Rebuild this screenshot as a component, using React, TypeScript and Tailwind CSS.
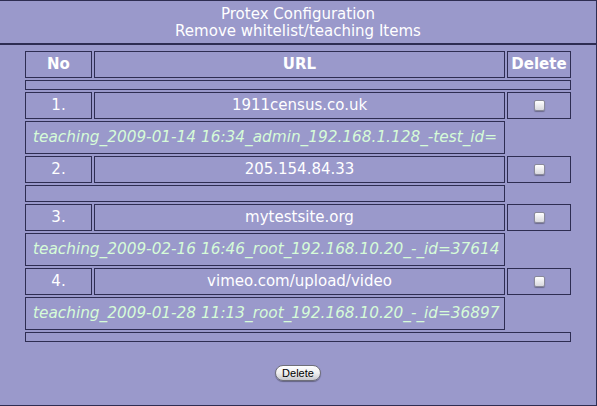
const rows = [
  { no: "1.", url: "1911census.co.uk", note: "teaching_2009-01-14 16:34_admin_192.168.1.128_-test_id=" },
  { no: "2.", url: "205.154.84.33", note: "" },
  { no: "3.", url: "mytestsite.org", note: "teaching_2009-02-16 16:46_root_192.168.10.20_-_id=37614" },
  { no: "4.", url: "vimeo.com/upload/video", note: "teaching_2009-01-28 11:13_root_192.168.10.20_-_id=36897" },
];

const cell = "border border-[#2e2d52] flex items-center justify-center";

function Checkbox() {
  return (
    <div className="w-[11px] h-[11px] rounded-[2px] border border-[#8a8a9a] bg-gradient-to-b from-white to-[#d8d8de] shadow-[0_1px_1px_rgba(0,0,0,0.3)]" />
  );
}

export default function App() {
  return (
    <div
      className="w-[597px] h-[406px] bg-[#9a99cb] border-t border-r border-b border-[#2e2d52] text-white overflow-hidden"
      style={{ fontFamily: '"DejaVu Sans", Verdana, sans-serif' }}
    >
      {/* Title */}
      <div className="h-[44px] border-b-2 border-[#2e2d52] flex flex-col items-center justify-center text-[15px] leading-[17px] pt-[2px]">
        <div>Protex Configuration</div>
        <div>Remove whitelist/teaching Items</div>
      </div>

      {/* Items table */}
      <div className="pl-[25px] mt-[6px]">
        <div className="grid grid-cols-[67px_411px_64px] gap-[2px] text-[15px]">
          <div className={`${cell} h-[27px] font-bold`}>No</div>
          <div className={`${cell} h-[27px] font-bold`}>URL</div>
          <div className={`${cell} h-[27px] font-bold`}>Delete</div>
          <div className="col-span-3 h-[10px] border border-[#2e2d52]" />

          {rows.map((r, i) => (
            <div key={r.no} className="contents">
              <div className={`${cell} h-[27px]`}>{r.no}</div>
              <div className={`${cell} h-[27px]`}>{r.url}</div>
              <div className={`${cell} h-[27px]`}>
                <Checkbox />
              </div>
              {r.note ? (
                <div className="col-span-2 h-[33px] border border-[#2e2d52] flex items-center pl-[7px] overflow-hidden whitespace-nowrap italic text-[15.3px] text-[#d6fcd8]">
                  {r.note}
                </div>
              ) : i < rows.length - 1 ? (
                <div className="col-span-2 h-[17px] border border-[#2e2d52]" />
              ) : null}
              {(r.note || i < rows.length - 1) && <div />}
            </div>
          ))}

          <div className="col-span-3 h-[10px] border border-[#2e2d52]" />
        </div>
      </div>

      {/* Submit */}
      <div className="flex justify-center mt-[23px]">
        <button
          className="w-[46px] h-[16px] rounded-full border border-[#6f6f7a] bg-gradient-to-b from-white via-[#eeeeef] to-[#c9c9cf] text-black text-[11px] leading-none flex items-center justify-center shadow-[0_1px_1px_rgba(0,0,0,0.35)]"
          style={{ fontFamily: '"Liberation Sans", Arial, sans-serif' }}
        >
          Delete
        </button>
      </div>
    </div>
  );
}
